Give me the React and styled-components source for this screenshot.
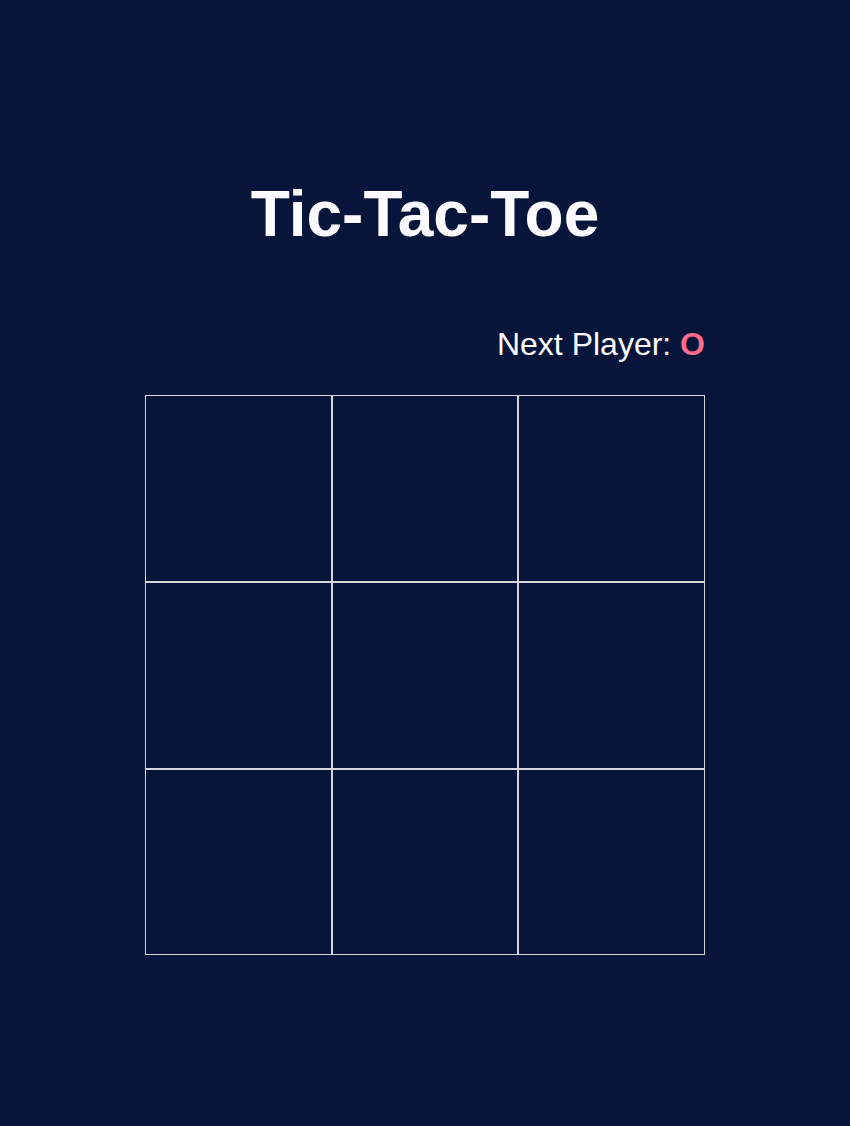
import React, { useState } from "react"
import styled, { createGlobalStyle } from "styled-components"

const GlobalStyle = createGlobalStyle`
  html, body {
    margin: 0;
    padding: 0;
    background: #061539;
  }
  body {
    min-height: 1126px;
    font-family: "Liberation Sans", Arial, Helvetica, sans-serif;
    color: #fdfbff;
  }
`

const Page = styled.main`
  display: flex;
  flex-direction: column;
  align-items: center;
  padding-top: 176px;
`

const Title = styled.h1`
  margin: 0 0 72px;
  font-size: 64px;
  line-height: 1.2;
  font-weight: bold;
`

const Game = styled.section`
  width: 560px;
  display: flex;
  flex-direction: column;
`

const Status = styled.p`
  margin: 0 0 32px;
  font-size: 32px;
  line-height: 1.2;
  text-align: right;
`

const Player = styled.span`
  color: ${props => (props.mark === "O" ? "#ff6b8b" : "#6bd5ff")};
  font-weight: bold;
`

const Board = styled.div`
  display: grid;
  grid-template-columns: repeat(3, 1fr);
  grid-template-rows: repeat(3, 1fr);
  width: 560px;
  height: 560px;
`

const Cell = styled.button`
  box-sizing: border-box;
  margin: 0;
  padding: 0;
  border: 1px solid #d4d4da;
  background: transparent;
  color: ${props => (props.mark === "O" ? "#ff6b8b" : "#6bd5ff")};
  font-family: inherit;
  font-size: 96px;
  font-weight: bold;
  cursor: pointer;
`

export default function App() {
  const [squares, setSquares] = useState(Array(9).fill(null))
  const [xIsNext, setXIsNext] = useState(false)
  const next = xIsNext ? "X" : "O"

  const play = i => {
    if (squares[i]) return
    const copy = squares.slice()
    copy[i] = next
    setSquares(copy)
    setXIsNext(!xIsNext)
  }

  return (
    <>
      <GlobalStyle />
      <Page>
        <Title>Tic-Tac-Toe</Title>
        <Game>
          <Status>
            Next Player: <Player mark={next}>{next}</Player>
          </Status>
          <Board>
            {squares.map((mark, i) => (
              <Cell key={i} mark={mark} onClick={() => play(i)}>
                {mark}
              </Cell>
            ))}
          </Board>
        </Game>
      </Page>
    </>
  )
}
